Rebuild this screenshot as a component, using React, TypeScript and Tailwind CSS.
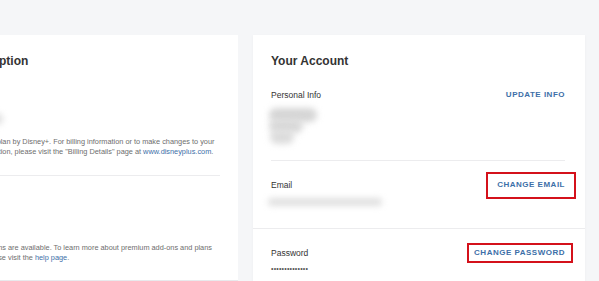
import React from 'react';

const font = { fontFamily: '"Liberation Sans", Arial, sans-serif' };

const Blur: React.FC<{ className: string }> = ({ className }) => (
  <div className={`rounded-full blur-[3px] ${className}`} />
);

const LinkButton: React.FC<{ label: string; box?: string }> = ({ label, box }) => (
  <span className="relative inline-block text-[8px] leading-[10px] font-bold tracking-[0.5px] text-[#3d6fa8]">
    {label}
    {box && <span className={`absolute border-2 border-[#d4111b] ${box}`} />}
  </span>
);

export default function App() {
  return (
    <div className="h-[281px] w-[599px] overflow-hidden bg-[#f5f6f8] pt-[35px]" style={font}>
      <div className="flex gap-[15px] items-start">
        {/* Subscription card, partly off screen */}
        <section className="ml-[-59px] w-[297px] h-[246px] shrink-0 bg-white border-b border-[#e8e9ec] pl-[18px] pr-[18px] pt-[18px]">
          <h2 className="ml-[-4px] text-[12px] leading-[16px] font-bold text-[#333] whitespace-nowrap">Subscription</h2>
          <Blur className="mt-[44px] ml-[-20px] w-[64px] h-[12px] bg-[#e0e0e0]" />
          <div className="mt-[12px] ml-[-4px] text-[7.35px] leading-[10px] text-[#6e6e6e] whitespace-nowrap">
            <div>via a bundle plan by Disney+. For billing information or to make changes to your</div>
            <div>
              your subscription, please visit the "Billing Details" page at{' '}
              <span className="text-[#3d6fa8]">www.disneyplus.com</span>.
            </div>
          </div>
          <div className="mt-[18px] h-px bg-[#ececee]" />
          <div className="mt-[67px] ml-[0px] text-[7.35px] leading-[10px] text-[#6e6e6e] whitespace-nowrap">
            <div>Other add-ons are available. To learn more about premium add-ons and plans</div>
            <div>
              details, please visit the <span className="text-[#3d6fa8]">help page</span>.
            </div>
          </div>
        </section>

        {/* Your Account card */}
        <section className="w-[332px] h-[246px] shrink-0 bg-white shadow-[0_1px_3px_rgba(0,0,0,0.04)]">
          <div className="pl-[18px] pr-[20px] pt-[18px] pb-[22px]">
            <h2 className="text-[12px] leading-[16px] font-bold text-[#333]">Your Account</h2>
            <div className="mt-[20px] h-[12px] flex items-center justify-between">
              <span className="text-[8.5px] text-[#333]">Personal Info</span>
              <LinkButton label="UPDATE INFO" />
            </div>
            <div className="relative mt-[6px] h-[38px] ml-[-2px]">
              <Blur className="absolute left-0 top-[1px] w-[48px] h-[14px] bg-[#d6d6d6]" />
              <Blur className="absolute left-0 top-[12px] w-[34px] h-[14px] bg-[#d9d9d9]" />
              <Blur className="absolute left-[1px] top-[23px] w-[24px] h-[14px] bg-[#dcdcdc]" />
            </div>
            <div className="mt-[15px] h-px bg-[#ececee]" />
            <div className="mt-[18px] h-[12px] flex items-center justify-between">
              <span className="text-[8.5px] text-[#333]">Email</span>
              <LinkButton label="CHANGE EMAIL" box="left-[-11px] right-[-11px] top-[-8px] bottom-[-9px]" />
            </div>
            <Blur className="mt-[7px] ml-[-3px] w-[114px] h-[8px] bg-[#e0e0e0]" />
          </div>
          <div className="border-t border-[#ececee] pl-[18px] pr-[20px] pt-[18px]">
            <div className="h-[12px] flex items-center justify-between">
              <span className="text-[8.5px] text-[#333]">Password</span>
              <LinkButton label="CHANGE PASSWORD" box="left-[-7px] right-[-8px] top-[-5px] bottom-[-5px]" />
            </div>
            <div className="mt-[6px] h-[8px] text-[7px] leading-[8px] text-[#555] tracking-[0.2px] whitespace-nowrap">
              ••••••••••••••
            </div>
          </div>
        </section>
      </div>
    </div>
  );
}
